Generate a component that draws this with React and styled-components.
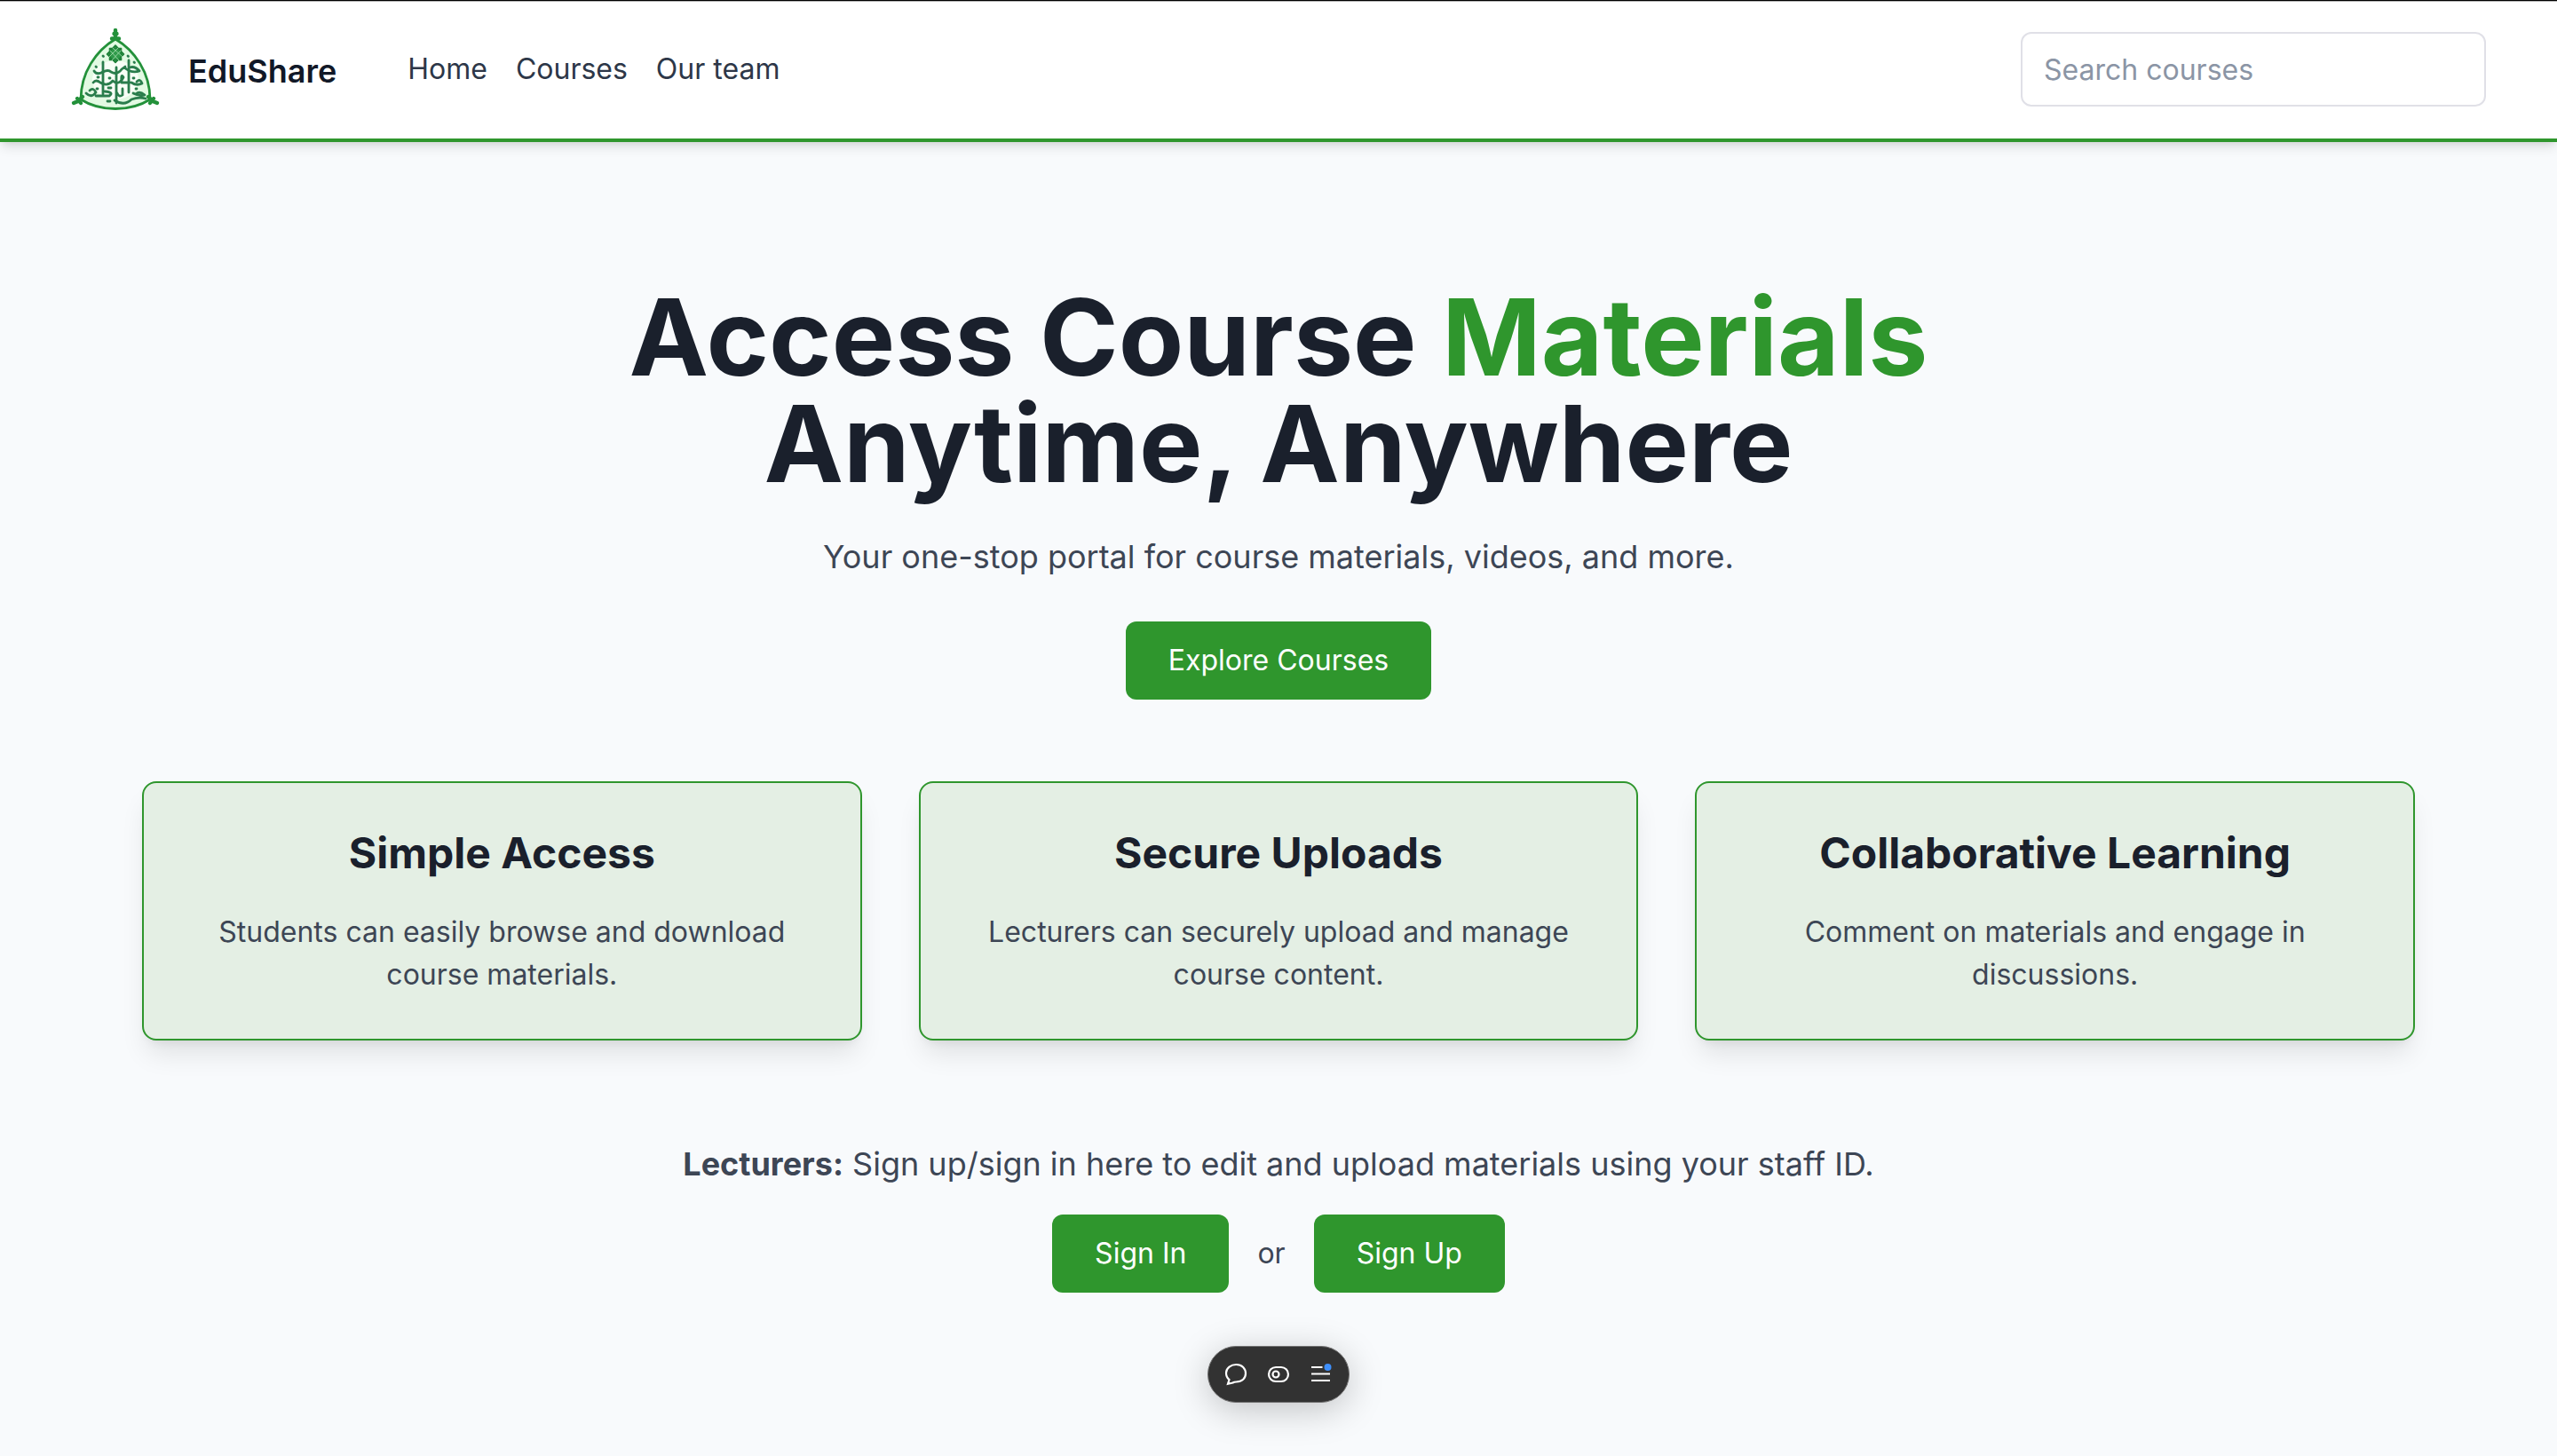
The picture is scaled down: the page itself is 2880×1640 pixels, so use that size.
import React from "react";
import styled, { createGlobalStyle } from "styled-components";

const GREEN = "#2f962d";

const GlobalStyle = createGlobalStyle`
  *, *::before, *::after { box-sizing: border-box; }
  body {
    margin: 0;
    background: #f8fafc;
    color: #3d4655;
    font-family: Inter, "Liberation Sans", sans-serif;
    font-size: 32px;
    line-height: 48px;
  }
  h1, h2, p { margin: 0; }
  a { color: inherit; text-decoration: none; }
`;

const TopLine = styled.div`
  height: 2px;
  background: #000;
  border-bottom: 1px solid #b4b4b4;
`;

const Header = styled.header`
  display: flex;
  align-items: center;
  justify-content: space-between;
  height: 158px;
  padding: 0 80px 2px;
  background: #fff;
  border-bottom: 4px solid ${GREEN};
  box-shadow: 0 8px 12px -2px rgba(0, 0, 0, 0.1), 0 4px 8px -4px rgba(0, 0, 0, 0.1);
`;

const HeaderLeft = styled.div`
  display: flex;
  align-items: center;
  gap: 80px;
`;

const Brand = styled.a`
  display: flex;
  align-items: center;
  gap: 32px;
  color: #111827;
  font-size: 36px;
  font-weight: 600;
  line-height: 54px;
`;

const BrandName = styled.span`
  padding-top: 4px;
`;

const LogoImage = styled.svg`
  display: block;
  width: 100px;
  height: 92px;
`;

const Nav = styled.nav`
  display: flex;
  gap: 32px;
  color: #2d3748;
`;

const Search = styled.input`
  width: 524px;
  height: 84px;
  padding: 0 24px;
  border: 2px solid #e0e0e7;
  border-radius: 12px;
  background: #fff;
  color: #2d3748;
  font: inherit;
  outline: none;
  &::placeholder { color: #8b95a5; opacity: 1; }
`;

const Main = styled.main`
  display: flex;
  flex-direction: column;
  align-items: center;
  padding: 160px 160px 184px;
  text-align: center;
`;

const Title = styled.h1`
  max-width: 1536px;
  margin-bottom: 40px;
  color: #1a202c;
  font-size: 120px;
  font-weight: 700;
  line-height: 120px;
`;

const Accent = styled.span`
  color: ${GREEN};
`;

const Lead = styled.p`
  font-size: 36px;
  line-height: 54px;
`;

const Button = styled.button`
  padding: 20px 48px;
  border: 0;
  border-radius: 12px;
  background: ${GREEN};
  color: #fff;
  font: inherit;
  cursor: pointer;
`;

const HeroAction = styled.div`
  margin-top: 46px;
`;

const Cards = styled.section`
  display: grid;
  grid-template-columns: repeat(3, 1fr);
  gap: 64px;
  width: 100%;
  margin: 92px 0 112px;
`;

const Card = styled.article`
  padding: 48px;
  border: 2px solid ${GREEN};
  border-radius: 16px;
  background: #e4efe4;
  box-shadow: 0 20px 30px -6px rgba(0, 0, 0, 0.1), 0 8px 12px -8px rgba(0, 0, 0, 0.1);
`;

const CardTitle = styled.h2`
  margin-bottom: 34px;
  color: #1a202c;
  font-size: 48px;
  font-weight: 700;
  line-height: 62px;
`;

const SignRow = styled.div`
  display: flex;
  align-items: center;
  gap: 32px;
  margin-top: 30px;
`;

const Toolbar = styled.div`
  position: fixed;
  bottom: 60px;
  left: 50%;
  display: flex;
  align-items: center;
  justify-content: space-between;
  width: 160px;
  height: 64px;
  margin-left: -80px;
  padding: 0 16px;
  border-radius: 32px;
  background: #323232;
  border: 1px solid #707070;
  box-shadow: 0 8px 40px rgba(0, 0, 0, 0.22);
`;

const ToolButton = styled.button`
  display: grid;
  place-items: center;
  width: 32px;
  height: 32px;
  padding: 0;
  border: 0;
  background: none;
  cursor: pointer;
`;

const ToolIcon = styled.svg`
  display: block;
  width: 32px;
  height: 32px;
  fill: none;
  stroke: #fff;
  stroke-width: 2.2;
`;

function Logo() {
  return (
    <LogoImage viewBox="0 0 100 92" role="img" aria-label="EduShare logo" fill="none" stroke="#23913a" strokeLinecap="round" strokeLinejoin="round">
      <path d="M50 12C28 25 11 50 11 80C33 94 67 94 89 80C89 50 72 25 50 12Z" fill="#e2fae2" strokeWidth="2.8" />
      <ellipse cx="50" cy="58" rx="26" ry="22" fill="#f8fff6" stroke="none" />
      <path d="M50 2V11M46 11.500H54M48.500 6H51.500" strokeWidth="4.400" />
      <path d="M13 77L8 82L3 84M7 79L11 84M87 77L92 82L97 84M93 79L89 84" strokeWidth="4.400" />
      <path d="M43.500 22.500H56.500V35.500H43.500ZM50 19L59.500 29L50 38.500L40.500 29Z" fill="#2f9a4a" stroke="#1f8038" strokeWidth="1.600" />
      <path d="M44 25L54 36M47 22L58 32M56 25L46 36M53 22L43 32" stroke="#9bd6a5" strokeWidth="0.900" />
      <g stroke="#2a7d4c" strokeWidth="2.800">
        <path d="M36 38V74M51 44V84M65 36V72" />
        <path d="M26 48Q29 53 36 49Q42 46 45 49Q52 53 57 46L61 43M60 44Q68 51 77 48Q72 42 66 44" />
        <path d="M25 61Q28 57 33 61Q41 66 47 59Q54 65 59 55Q56 50 57 61H66M68 61Q74 65 80 62Q78 56 74 60" />
        <path d="M17 73Q23 79 28 72Q25 66 21 70M28 76H43Q49 72 38 71M49 81Q60 88 68 80Q76 77 84 79M70 73Q78 77 83 75Q77 70 73 74M58 68V75Q54 78 52 73" />
      </g>
      <g stroke="#2a7d4c" strokeWidth="2.800">
        <path d="M36 31L36.500 31.500M64 31L64.500 31.500M71 38L71.500 38.500M28 43L28.500 43.500M30 55H31M43 56H44M70 56H71M42 67H45M29 68H30M73 68H74M41 82H44" />
      </g>
    </LogoImage>
  );
}

const features = [
  { title: "Simple Access", text: "Students can easily browse and download course materials." },
  { title: "Secure Uploads", text: "Lecturers can securely upload and manage course content." },
  { title: "Collaborative Learning", text: "Comment on materials and engage in discussions." },
];

export default function App() {
  return (
    <>
      <GlobalStyle />
      <TopLine />
      <Header>
        <HeaderLeft>
          <Brand href="#home">
            <Logo />
            <BrandName>EduShare</BrandName>
          </Brand>
          <Nav>
            <a href="#home">Home</a>
            <a href="#courses">Courses</a>
            <a href="#team">Our team</a>
          </Nav>
        </HeaderLeft>
        <Search type="text" placeholder="Search courses" aria-label="Search courses" />
      </Header>
      <Main>
        <Title>
          Access Course <Accent>Materials</Accent> Anytime, Anywhere
        </Title>
        <Lead>Your one-stop portal for course materials, videos, and more.</Lead>
        <HeroAction>
          <Button type="button">Explore Courses</Button>
        </HeroAction>
        <Cards>
          {features.map((f) => (
            <Card key={f.title}>
              <CardTitle>{f.title}</CardTitle>
              <p>{f.text}</p>
            </Card>
          ))}
        </Cards>
        <Lead>
          <strong>Lecturers:</strong> Sign up/sign in here to edit and upload materials using your staff ID.
        </Lead>
        <SignRow>
          <Button type="button">Sign In</Button>
          <span>or</span>
          <Button type="button">Sign Up</Button>
        </SignRow>
      </Main>
      <Toolbar role="toolbar" aria-label="Page tools">
        <ToolButton type="button" aria-label="Comment">
          <ToolIcon viewBox="0 0 32 32">
            <path d="M15.500 5C22 5 26 9.500 26 15S22 24.500 15.500 24.500C14 24.500 13 24.500 11.500 25.500L6 26.800L7.500 22C5 20 4 17.500 4 14.500C4 9 9.500 5 15.500 5Z" />
          </ToolIcon>
        </ToolButton>
        <ToolButton type="button" aria-label="Draft mode">
          <ToolIcon viewBox="0 0 32 32">
            <rect x="5" y="8" width="22" height="16" rx="8" />
            <circle cx="13" cy="16" r="3.500" />
          </ToolIcon>
        </ToolButton>
        <ToolButton type="button" aria-label="Menu">
          <ToolIcon viewBox="0 0 32 32">
            <path d="M6 8H18.500M6 15.500H27M6 23H27" />
            <circle cx="24.500" cy="8" r="4" fill="#3e8ffb" stroke="none" />
          </ToolIcon>
        </ToolButton>
      </Toolbar>
    </>
  );
}
